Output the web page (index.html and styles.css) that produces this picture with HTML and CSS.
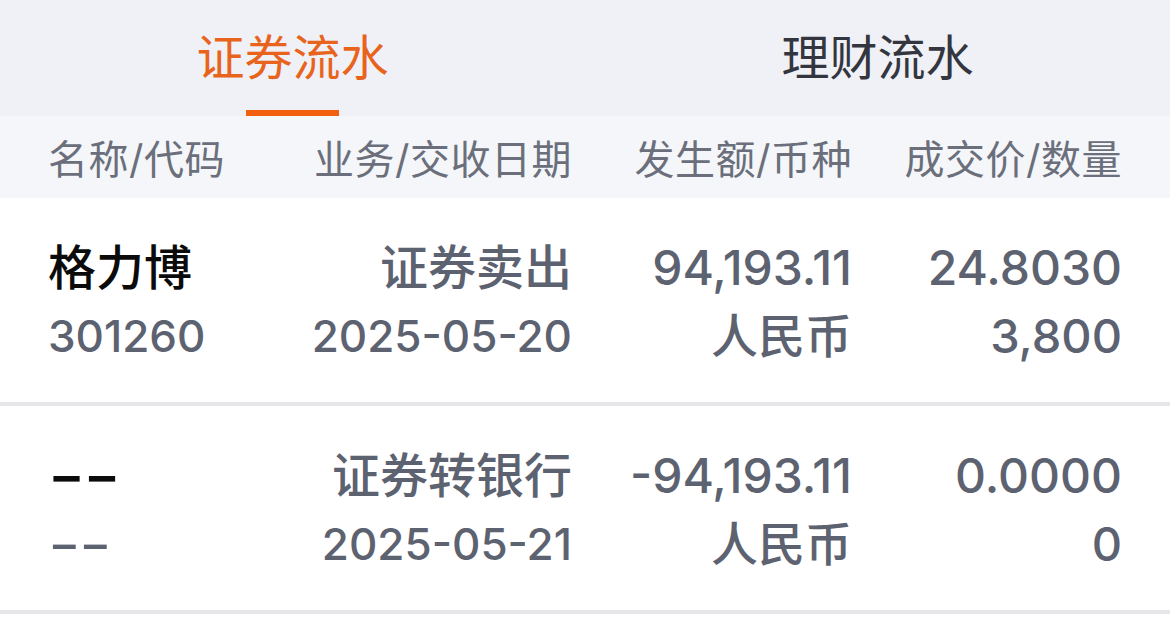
FILE: index.html
```html
<!DOCTYPE html>
<html lang="zh-CN">
  <head>
    <meta charset="utf-8" />
    <title>证券流水</title>
    <meta name="viewport" content="width=device-width, initial-scale=1.0" />
    <link rel="stylesheet" href="styles.css">
  </head>

  <body>
    <nav class="tabs">
      <div class="tab active">
        <span class="tabLabel">证券流水</span>
        <span class="tabBar"></span>
      </div>
      <div class="tab">
        <span class="tabLabel">理财流水</span>
        <span class="tabBar"></span>
      </div>
    </nav>

    <div class="grid head">
      <div class="cell left">名称/代码</div>
      <div class="cell">业务/交收日期</div>
      <div class="cell">发生额/币种</div>
      <div class="cell">成交价/数量</div>
    </div>

    <div class="grid row">
      <div class="cell left">
        <div class="main name">格力博</div>
        <div class="sub num">301260</div>
      </div>
      <div class="cell">
        <div class="main">证券卖出</div>
        <div class="sub num">2025-05-20</div>
      </div>
      <div class="cell">
        <div class="main">94,193.11</div>
        <div class="sub">人民币</div>
      </div>
      <div class="cell">
        <div class="main">24.8030</div>
        <div class="sub">3,800</div>
      </div>
    </div>

    <div class="grid row">
      <div class="cell left">
        <div class="main name"><span class="empty">--</span></div>
        <div class="sub"><span class="empty thin">--</span></div>
      </div>
      <div class="cell">
        <div class="main">证券转银行</div>
        <div class="sub num">2025-05-21</div>
      </div>
      <div class="cell">
        <div class="main">-94,193.11</div>
        <div class="sub">人民币</div>
      </div>
      <div class="cell">
        <div class="main">0.0000</div>
        <div class="sub">0</div>
      </div>
    </div>
  </body>
</html>
```

FILE: styles.css
```css
*,
*::before,
*::after {
  box-sizing: border-box;
}

* {
  margin: 0;
}

body {
  background-color: #fff;
  color: #5d6271;
  font-family: Inter, "Noto Sans CJK SC", sans-serif;
  font-weight: normal;
}

.tabs {
  background-color: #f0f1f6;
  display: flex;
  height: 116px;
}

.tab {
  align-items: center;
  color: #34363f;
  display: flex;
  flex: 1;
  flex-direction: column;
  justify-content: flex-end;
}

.tabLabel {
  font-size: 48px;
  line-height: 1;
  margin-bottom: 28px;
}

.tabBar {
  height: 6px;
  width: 93px;
}

.tab.active {
  color: #e8631c;
}

.tab.active .tabBar {
  background-color: #f2600f;
}

.grid {
  display: grid;
  grid-template-columns: 244px 280px 280px 270px;
  padding-inline: 48px 46px;
}

.head {
  align-items: center;
  background-color: #f4f6f9;
  color: #6b6f7b;
  font-size: 40px;
  height: 82px;
  letter-spacing: 0.5px;
}

.cell {
  text-align: right;
  white-space: nowrap;
}

.cell.left {
  text-align: left;
}

.row {
  border-bottom: 4px solid #e6e6e9;
  font-size: 48px;
  font-weight: 500;
  line-height: 68px;
  padding-block: 36px 32px;
}

.name {
  color: #0b0b0c;
}

.sub {
  font-size: 47px;
}

.sub.num {
  font-size: 44px;
}

.empty {
  display: inline-block;
  font-weight: 700;
  letter-spacing: -1px;
  transform: scaleX(1.65);
  transform-origin: left center;
}

.empty.thin {
  font-weight: 500;
  transform: scaleX(1.5);
}
```
